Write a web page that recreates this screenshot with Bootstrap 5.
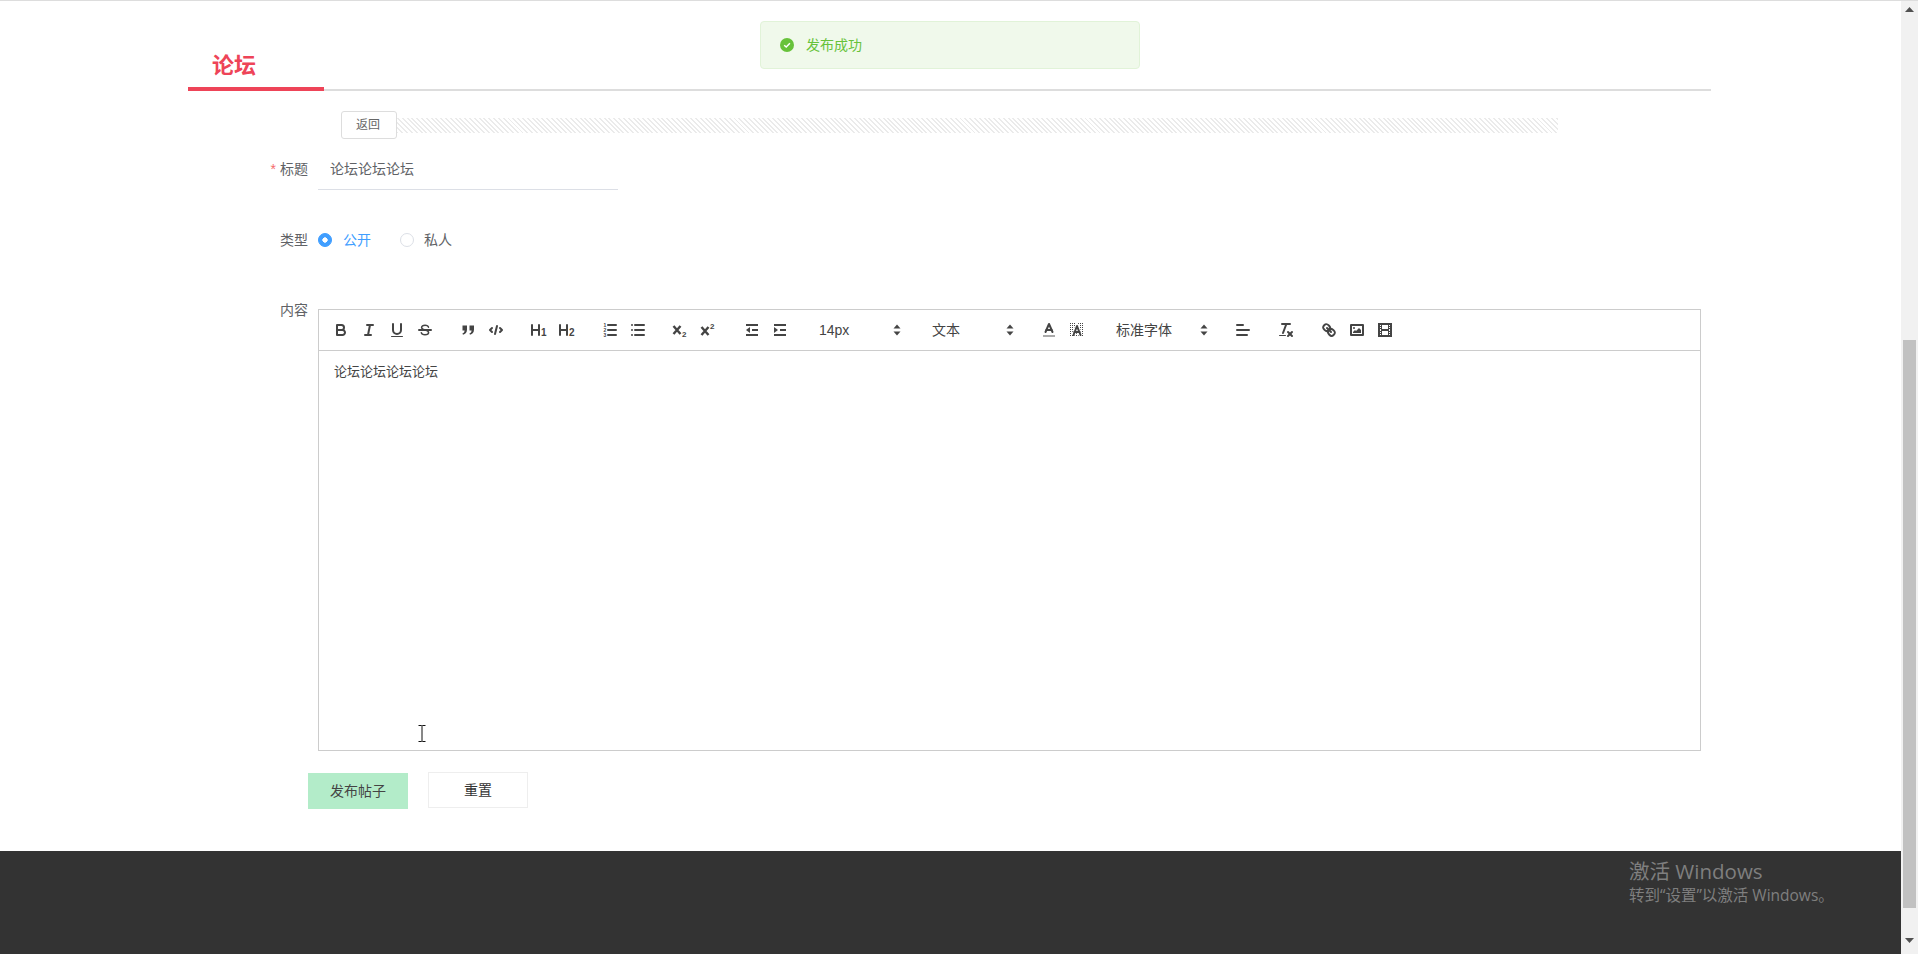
<!doctype html>
<html lang="zh-CN">
<head>
<meta charset="utf-8">
<title>论坛</title>
<link href="https://cdn.jsdelivr.net/npm/bootstrap@5.3.0/dist/css/bootstrap.min.css" rel="stylesheet">
<style>
html,body{height:954px;overflow:hidden}
body{font-family:"Liberation Sans","Noto Sans CJK SC",sans-serif;font-size:14px;color:#606266;background:#fff}
.page-main{height:954px;min-width:0;border-top:1px solid #ddd}
.tab-head{height:90px;margin:0 190px 0 188px;border-bottom:2px solid #ddd}
.tab-cur{width:136px;height:90px;padding:53px 0 0 24px;border-bottom:4px solid #ee4458;color:#ee4458;font-size:22px;font-weight:700;line-height:24px}
.form-frame{margin-left:188px}
.back-row{margin:20px 0 0 153px;width:1217px}
.back-btn{width:56px;height:28px;padding:0 2px 0 0;font-size:12px;line-height:26px;color:#666;border:1px solid #ddd;border-radius:3px;background:#fff}
.hatch{height:15px;background:repeating-linear-gradient(45deg,#ebebeb 0,#ebebeb 1.4px,#fff 1.4px,#fff 3.4px)}
.lbl{width:120px;margin-right:10px;text-align:right;flex:none;color:#606266;line-height:40px}
.title-lbl{line-height:38px}
.req{color:#f56c6c;margin-right:4px}
.title-row{margin-top:11px}
.title-input.form-control{width:300px;height:40px;padding:0 12px 3px;border:0;border-bottom:1px solid #dcdfe6;border-radius:0;font-size:14px;color:#606266;box-shadow:none;font-family:inherit}
.type-row{margin-top:30px;height:40px}
.rd.form-check-input{width:14px;height:14px;margin:0 11px 0 0;border:1px solid #dcdfe6;background-color:#fff;background-image:none;float:none;flex:none}
.rd.form-check-input:checked{background-color:#409eff;border-color:#409eff;background-image:radial-gradient(circle,#fff 0,#fff 2.4px,transparent 2.9px)}
.rd-on{color:#409eff;margin-right:29px}
.rd-off{color:#606266;margin-right:0}
.rd-off-i.form-check-input{margin-right:10px}
.content-row{margin-top:40px}
.content-lbl{line-height:20px}
.editor{width:1383px;margin-top:9px;border:1px solid #ccc;color:#444}
.tool{height:41px;padding:8px;border-bottom:1px solid #ccc}
.grp{margin-right:15px;height:24px}
.tb{width:28px;height:24px;padding:3px 5px;flex:none}
.tb svg{display:block;width:18px;height:18px}
.s{fill:none;stroke:#444;stroke-width:2;stroke-linecap:round;stroke-linejoin:round}
.sm{fill:none;stroke:#444;stroke-width:2}
.x{fill:none;stroke:#444;stroke-width:2.4}
.f{fill:#444}
.num{fill:#444;font-family:"Liberation Sans",sans-serif;font-weight:700}
.pick{height:24px;padding:0 1px 0 10px;line-height:24px;font-size:14px;color:#444}
.pick svg{display:block;width:18px;height:18px;margin:3px 0}
.w98{width:98px}
.w108{width:108px}
.ed-body{height:399px;padding:12px 15px;font-size:13px;line-height:18.5px;color:#444}
.act-row{margin:21px 0 0 120px;gap:20px}
.btn-pub{width:100px;height:36px;margin-top:1px;padding:0;border:0;border-radius:0;background:#b3ecc9;color:#444;font-size:14px}
.btn-rst{width:100px;height:36px;padding:0;border:1px solid #eee;border-radius:0;background:#fff;color:#333;font-size:14px}
.page-foot{background:#333;min-height:103px}
.scroll-col{width:17px;height:954px;background:#f1f1f1;flex:none;border-top:1px solid #ddd}
.arrow{height:17px}
.thumb-gap{height:322px}
.thumb{width:13px;height:568px;margin-left:2px;background:#c1c1c1}
.toast-msg{position:absolute;left:760px;top:21px;width:380px;height:48px;padding-left:19px;background:#f0f9eb;border:1px solid #e1f3d8;border-radius:4px;color:#67c23a;font-size:14px}
.activate{position:absolute;left:1629px;top:857px;color:#7f7f7f;font-family:"Open Sans","Noto Sans CJK SC",sans-serif}
.act-a{font-size:20.5px;line-height:28px}
.act-b{font-size:15.5px;line-height:20px}
.ibeam{position:absolute;left:418px;top:725px}
</style>
</head>
<body>
<div class="d-flex">
  <div class="page-main flex-grow-1 d-flex flex-column">
    <div class="tab-head"><div class="tab-cur">论坛</div></div>
    <div class="form-frame">
      <div class="back-row d-flex align-items-center">
        <button type="button" class="btn back-btn flex-none">返回</button>
        <div class="hatch flex-grow-1"></div>
      </div>
      <div class="title-row d-flex">
        <label class="lbl title-lbl" for="ttl"><span class="req">*</span>标题</label>
        <input id="ttl" class="form-control title-input" value="论坛论坛论坛">
      </div>
      <div class="type-row d-flex align-items-center">
        <span class="lbl">类型</span>
        <input class="form-check-input rd" type="radio" name="tp" checked>
        <span class="rd-on">公开</span>
        <input class="form-check-input rd rd-off-i" type="radio" name="tp">
        <span class="rd-off">私人</span>
      </div>
      <div class="content-row d-flex">
        <span class="lbl content-lbl">内容</span>
        <div class="editor">
          <div class="tool d-flex">
            <div class="grp d-flex">
              <span class="tb"><svg viewBox="0 0 18 18"><path class="s" d="M5,4H9.5A2.5,2.5,0,0,1,12,6.5v0A2.5,2.5,0,0,1,9.5,9H5V4Z"/><path class="s" d="M5,9h5.5A2.5,2.5,0,0,1,13,11.5v0A2.5,2.5,0,0,1,10.5,14H5V9Z"/></svg></span>
              <span class="tb"><svg viewBox="0 0 18 18"><line class="s" x1="7" x2="13" y1="4" y2="4"/><line class="s" x1="5" x2="11" y1="14" y2="14"/><line class="s" x1="8" x2="10" y1="14" y2="4"/></svg></span>
              <span class="tb"><svg viewBox="0 0 18 18"><path class="s" d="M5,3V9a4,4,0,0,0,4,4H9a4,4,0,0,0,4-4V3"/><rect class="f" height="1" rx=".5" width="12" x="3" y="15"/></svg></span>
              <span class="tb"><svg viewBox="0 0 18 18"><line class="s" x1="3" x2="15" y1="9" y2="9"/><path class="s" style="stroke-width:1.5" d="M12.5,6.2C12.2,4.9,10.8,4.2,9,4.2,7,4.2,5.6,5.1,5.6,6.5c0,3,7,2,7,5,0,1.4-1.5,2.3-3.6,2.3-1.9,0-3.4-.8-3.7-2.1"/></svg></span>
            </div>
            <div class="grp d-flex">
              <span class="tb"><svg viewBox="0 0 18 18"><path class="f" d="M3.5,4.5H8V8.5C8,11.5,6.5,13,4,13.8L3.4,12.6C4.8,12,5.5,11,5.6,9.5H3.5Z"/><path class="f" d="M10.5,4.5H15V8.5C15,11.5,13.5,13,11,13.8L10.4,12.6C11.8,12,12.5,11,12.6,9.5H10.5Z"/></svg></span>
              <span class="tb"><svg viewBox="0 0 18 18"><polyline class="s" points="5 7 3 9 5 11"/><polyline class="s" points="13 7 15 9 13 11"/><line class="s" x1="10" x2="8" y1="5" y2="13"/></svg></span>
            </div>
            <div class="grp d-flex">
              <span class="tb"><svg viewBox="0 0 18 18"><path class="s" d="M2,4V14M9,4V14M2,9H9"/><text class="num" x="11" y="15" font-size="10">1</text></svg></span>
              <span class="tb"><svg viewBox="0 0 18 18"><path class="s" d="M2,4V14M9,4V14M2,9H9"/><text class="num" x="11" y="15" font-size="10">2</text></svg></span>
            </div>
            <div class="grp d-flex">
              <span class="tb"><svg viewBox="0 0 18 18"><line class="s" x1="7" x2="15" y1="4" y2="4"/><line class="s" x1="7" x2="15" y1="9" y2="9"/><line class="s" x1="7" x2="15" y1="14" y2="14"/><text class="num" x="2.4" y="6" font-size="5">1</text><text class="num" x="2.4" y="11" font-size="5">2</text><text class="num" x="2.4" y="16" font-size="5">3</text></svg></span>
              <span class="tb"><svg viewBox="0 0 18 18"><line class="s" x1="6" x2="15" y1="4" y2="4"/><line class="s" x1="6" x2="15" y1="9" y2="9"/><line class="s" x1="6" x2="15" y1="14" y2="14"/><line class="s" x1="3" x2="3" y1="4" y2="4"/><line class="s" x1="3" x2="3" y1="9" y2="9"/><line class="s" x1="3" x2="3" y1="14" y2="14"/></svg></span>
            </div>
            <div class="grp d-flex">
              <span class="tb"><svg viewBox="0 0 18 18"><path class="x" d="M1.5,5L8.5,13M8.5,5L1.5,13"/><text class="num" x="10" y="15.5" font-size="8" font-weight="400">2</text></svg></span>
              <span class="tb"><svg viewBox="0 0 18 18"><path class="x" d="M1.5,6L8.5,14M8.5,6L1.5,14"/><text class="num" x="10" y="7.5" font-size="8" font-weight="400">2</text></svg></span>
            </div>
            <div class="grp d-flex">
              <span class="tb"><svg viewBox="0 0 18 18"><line class="sm" x1="3" x2="15" y1="14" y2="14"/><line class="sm" x1="3" x2="15" y1="4" y2="4"/><line class="sm" x1="9" x2="15" y1="9" y2="9"/><polygon class="f" points="7 6 7 12 3 9"/></svg></span>
              <span class="tb"><svg viewBox="0 0 18 18"><line class="sm" x1="3" x2="15" y1="14" y2="14"/><line class="sm" x1="3" x2="15" y1="4" y2="4"/><line class="sm" x1="9" x2="15" y1="9" y2="9"/><polygon class="f" points="3 6 3 12 7 9"/></svg></span>
            </div>
            <div class="grp pick w98 d-flex justify-content-between"><span>14px</span><svg viewBox="0 0 18 18"><polygon class="f" points="5.5 10.5 9 14.5 12.5 10.5"/><polygon class="f" points="5.5 7.5 9 3.5 12.5 7.5"/></svg></div>
            <div class="grp pick w98 d-flex justify-content-between"><span>文本</span><svg viewBox="0 0 18 18"><polygon class="f" points="5.5 10.5 9 14.5 12.5 10.5"/><polygon class="f" points="5.5 7.5 9 3.5 12.5 7.5"/></svg></div>
            <div class="grp d-flex">
              <span class="tb"><svg viewBox="0 0 18 18"><line x1="3" x2="15" y1="15" y2="15" stroke="#aaa" stroke-width="2"/><polyline class="s" points="5.5 11 9 3 12.5 11"/><line class="s" x1="11.6" x2="6.4" y1="9" y2="9"/></svg></span>
              <span class="tb"><svg viewBox="0 0 18 18"><defs><pattern id="dots" width="2" height="2" patternUnits="userSpaceOnUse"><rect width="1" height="1" fill="#444"/></pattern></defs><rect x="2" y="2" width="14" height="14" fill="url(#dots)"/><polyline points="5.5 14 9 5 12.5 14" fill="none" stroke="#fff" stroke-width="4"/><polyline class="s" points="5.5 14 9 5 12.5 14"/><line class="s" x1="11.6" x2="6.4" y1="11" y2="11"/></svg></span>
            </div>
            <div class="grp pick w108 d-flex justify-content-between"><span>标准字体</span><svg viewBox="0 0 18 18"><polygon class="f" points="5.5 10.5 9 14.5 12.5 10.5"/><polygon class="f" points="5.5 7.5 9 3.5 12.5 7.5"/></svg></div>
            <div class="grp d-flex">
              <span class="tb"><svg viewBox="0 0 18 18"><line class="s" x1="3" x2="15" y1="9" y2="9"/><line class="s" x1="3" x2="13" y1="14" y2="14"/><line class="s" x1="3" x2="9" y1="4" y2="4"/></svg></span>
            </div>
            <div class="grp d-flex">
              <span class="tb"><svg viewBox="0 0 18 18"><line class="s" x1="5" x2="13" y1="3" y2="3"/><line class="s" x1="6" x2="9.35" y1="12" y2="3"/><line class="s" x1="11" x2="15" y1="11" y2="15"/><line class="s" x1="15" x2="11" y1="11" y2="15"/><rect class="f" height="1" rx=".5" width="7" x="2" y="14"/></svg></span>
            </div>
            <div class="d-flex">
              <span class="tb"><svg viewBox="0 0 18 18"><line class="s" x1="7" x2="11" y1="7" y2="11"/><path class="s" d="M8.9,4.577a3.476,3.476,0,0,1,.36,4.679A3.476,3.476,0,0,1,4.577,8.9C3.185,7.5,2.035,6.4,4.217,4.217S7.5,3.185,8.9,4.577Z"/><path class="s" d="M13.423,9.1a3.476,3.476,0,0,0-4.679-.36,3.476,3.476,0,0,0,.36,4.679c1.392,1.392,2.5,2.542,4.679.36S14.815,10.5,13.423,9.1Z"/></svg></span>
              <span class="tb"><svg viewBox="0 0 18 18"><rect class="s" height="10" width="12" x="3" y="4"/><circle class="f" cx="6" cy="7" r="1"/><polyline class="f" points="5 12 5 11 7 9 8 10 11 7 13 9 13 12 5 12"/></svg></span>
              <span class="tb"><svg viewBox="0 0 18 18"><rect class="sm" height="12" width="12" x="3" y="3"/><rect class="f" height="12" width="1" x="5" y="3"/><rect class="f" height="12" width="1" x="12" y="3"/><rect class="f" height="2" width="8" x="5" y="8"/><rect class="f" height="1" width="3" x="3" y="5"/><rect class="f" height="1" width="3" x="3" y="7"/><rect class="f" height="1" width="3" x="3" y="10"/><rect class="f" height="1" width="3" x="3" y="12"/><rect class="f" height="1" width="3" x="12" y="5"/><rect class="f" height="1" width="3" x="12" y="7"/><rect class="f" height="1" width="3" x="12" y="10"/><rect class="f" height="1" width="3" x="12" y="12"/></svg></span>
            </div>
          </div>
          <div class="ed-body">论坛论坛论坛论坛</div>
        </div>
      </div>
      <div class="act-row d-flex align-items-start">
        <button type="button" class="btn btn-pub">发布帖子</button>
        <button type="button" class="btn btn-rst">重置</button>
      </div>
    </div>
    <div class="page-foot mt-auto"></div>
  </div>
  <div class="scroll-col">
    <div class="arrow d-flex justify-content-center align-items-center"><svg width="9" height="5" viewBox="0 0 9 5"><polygon points="4.5 0 9 5 0 5" fill="#505050"/></svg></div>
    <div class="thumb-gap"></div>
    <div class="thumb"></div>
    <div class="arrow mt-4 d-flex justify-content-center align-items-center"><svg width="9" height="5" viewBox="0 0 9 5"><polygon points="0 0 9 0 4.5 5" fill="#505050"/></svg></div>
  </div>
</div>

<div class="toast-msg d-flex align-items-center">
  <svg width="14" height="14" viewBox="0 0 14 14" class="me-2 flex-none"><circle cx="7" cy="7" r="7" fill="#67c23a"/><path d="M4.2 7.2 6.2 9.1 9.9 5.2" fill="none" stroke="#fff" stroke-width="1.4"/></svg>
  <span class="ms-1 msg-text">发布成功</span>
</div>
<div class="activate">
  <div class="act-a">激活 Windows</div>
  <div class="act-b">转到“设置”以激活 Windows。</div>
</div>
<svg class="ibeam" width="8" height="17" viewBox="0 0 8 17"><path d="M0.5 .5H3.5L4 1 4.5 .5H7.5M4 1V16M0.5 16.5H3.5L4 16 4.5 16.5H7.5" fill="none" stroke="#111" stroke-width="1"/></svg>
<script src="https://cdn.jsdelivr.net/npm/bootstrap@5.3.0/dist/js/bootstrap.bundle.min.js"></script>
</body>
</html>
